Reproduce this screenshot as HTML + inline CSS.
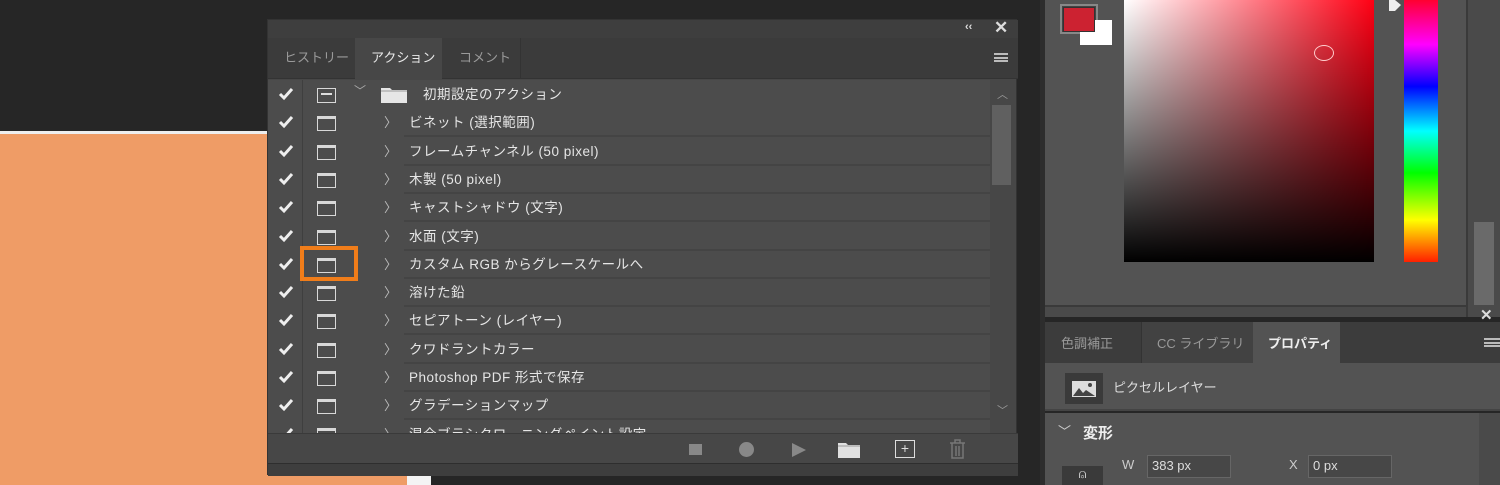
<!DOCTYPE html>
<html><head><meta charset="utf-8"><style>
*{margin:0;padding:0;box-sizing:border-box}
body{width:1500px;height:485px;background:#262626;position:relative;overflow:hidden;font-family:"Liberation Sans","Noto Sans CJK JP",sans-serif;color:#ddd;font-size:13px}
.a{position:absolute}
.row{position:absolute;left:0;width:722px;height:28px}
.row .ck{position:absolute;left:10px;top:6px}
.row .bx{position:absolute;left:49px;top:7px;width:19px;height:15px;border:1.5px solid #d8d8d8;border-top-width:3px}
.row .ar{position:absolute;left:116px;top:3px;color:#bbb;font-size:13px}
.row .tx{position:absolute;left:141px;top:2px;font-size:13.5px;color:#e6e6e6;letter-spacing:.5px}
.row .ln{position:absolute;left:136px;right:0;bottom:0;height:2px;background:#444}
</style></head><body>
<div class="a" style="left:0;top:131px;width:407px;height:3px;background:#eee"></div>
<div class="a" style="left:0;top:134px;width:407px;height:351px;background:#ef9c66"></div>
<div class="a" style="left:407px;top:470px;width:24px;height:15px;background:#f4f4f4"></div>

<div class="a" style="left:267px;top:19px;width:750px;height:456px;background:#474747;border:1px solid #333">
 <div class="a" style="left:0;top:0;width:750px;height:18px;background:#3e3e3e"></div>
 <div class="a" style="left:697px;top:1px;color:#ddd;font-size:11px;font-weight:bold">‹‹</div>
 <div class="a" style="left:726px;top:-2px;color:#ddd;font-size:17px;font-weight:bold">✕</div>
 <div class="a" style="left:0;top:18px;width:750px;height:41px;background:#3b3b3b;border-bottom:1px solid #333"></div>
 <div class="a" style="left:16px;top:27px;color:#9a9a9a;font-size:13px">ヒストリー</div>
 <div class="a" style="left:87px;top:18px;width:87px;height:42px;background:#474747"></div>
 <div class="a" style="left:103px;top:27px;color:#e8e8e8;font-size:13px">アクション</div>
 <div class="a" style="left:183px;top:18px;width:70px;height:41px;border-right:1px solid #333"></div>
 <div class="a" style="left:191px;top:27px;color:#9a9a9a;font-size:13px">コメント</div>
 <div class="a" style="left:726px;top:33px;width:14px;height:9px;border-top:2px solid #bbb;border-bottom:2px solid #bbb"><div style="margin-top:1.5px;height:2px;background:#bbb"></div></div>
 <div class="a" style="left:0;top:60px;width:722px;height:353px;background:#4c4c4c;overflow:hidden">
  <div class="a" style="left:34px;top:0;width:1px;height:353px;background:#3f3f3f"></div>
  <div id="rows"></div>
 </div>
 <div class="a" style="left:722px;top:60px;width:24px;height:353px;background:#474747"></div>
 <div class="a" style="left:729px;top:66px;color:#999;font-size:11px">︿</div>
 <div class="a" style="left:724px;top:85px;width:19px;height:80px;background:#606060"></div>
 <div class="a" style="left:729px;top:382px;color:#999;font-size:11px">﹀</div>
 <div class="a" style="left:0;top:413px;width:750px;height:30px;background:#474747;border-top:1px solid #3a3a3a"></div>
 <div class="a" style="left:421px;top:424px;width:13px;height:11px;background:#888"></div>
 <div class="a" style="left:471px;top:422px;width:15px;height:15px;border-radius:50%;background:#888"></div>
 <svg class="a" style="left:523px;top:422px" width="16" height="16"><path d="M1 1L15 8L1 15Z" fill="#888"/></svg>
 <svg class="a" style="left:570px;top:421px" width="22" height="17"><path d="M0 2h8l2 2h12v13H0Z" fill="#e0e0e0"/><path d="M0 5h22" stroke="#999"/></svg>
 <div class="a" style="left:627px;top:420px;width:20px;height:18px;border:1.5px solid #ddd;color:#ddd;font-size:14px;line-height:14px;text-align:center">+</div>
 <svg class="a" style="left:680px;top:419px" width="19" height="20"><path d="M2 4h15M7 4V1h5v3M4 4v15h11V4M8 7v10M11 7v10" stroke="#777" stroke-width="1.5" fill="none"/></svg>
 <div class="a" style="left:0;top:443px;width:750px;height:13px;background:#3e3e3e;border-top:1px solid #2e2e2e"></div>
</div>

<div class="a" style="left:1040px;top:0;width:5px;height:485px;background:#2d2d2d"></div>
<div class="a" style="left:1045px;top:0;width:421px;height:305px;background:#535353"></div>
<div class="a" style="left:1045px;top:305px;width:421px;height:12px;background:#4a4a4a;border-top:2px solid #3a3a3a"></div>
<div class="a" style="left:1466px;top:0;width:34px;height:317px;background:#4a4a4a;border-left:2px solid #3a3a3a"></div>
<div class="a" style="left:1474px;top:222px;width:20px;height:83px;background:#6a6a6a"></div>
<div class="a" style="left:1480px;top:306px;color:#ddd;font-size:15px;font-weight:bold">✕</div>
<div class="a" style="left:1060px;top:4px;width:38px;height:30px;border:2px solid #888;background:#444"></div>
<div class="a" style="left:1080px;top:20px;width:32px;height:25px;background:#fff"></div>
<div class="a" style="left:1063px;top:7px;width:32px;height:25px;background:#cc2231;border:1px solid #333"></div>
<div class="a" style="left:1124px;top:0;width:250px;height:262px;background:linear-gradient(to bottom,rgba(0,0,0,0),#000),linear-gradient(to right,#fff,#ff0014)"></div>
<div class="a" style="left:1314px;top:45px;width:20px;height:16px;border:1px solid #fcc;border-radius:50%"></div>
<div class="a" style="left:1404px;top:0;width:34px;height:262px;background:linear-gradient(to bottom,#ff0030 0%,#ff00ff 17%,#0000ff 33%,#00ffff 50%,#00ff00 66%,#ffff00 84%,#ff2000 100%)"></div>
<svg class="a" style="left:1388px;top:0" width="14" height="12"><path d="M1 0h6l6 5-6 6H1Z" fill="#eee"/></svg>

<div class="a" style="left:1045px;top:322px;width:455px;height:41px;background:#3c3c3c"></div>
<div class="a" style="left:1045px;top:322px;width:97px;height:41px;border-right:1px solid #333"></div>
<div class="a" style="left:1061px;top:333px;color:#999;font-size:13px">色調補正</div>
<div class="a" style="left:1142px;top:322px;width:111px;height:41px;background:#424242"></div>
<div class="a" style="left:1157px;top:333px;color:#999;font-size:13px">CC ライブラリ</div>
<div class="a" style="left:1253px;top:322px;width:87px;height:41px;background:#535353"></div>
<div class="a" style="left:1268px;top:333px;color:#eee;font-size:13px;font-weight:bold">プロパティ</div>
<div class="a" style="left:1484px;top:338px;width:16px;height:9px;border-top:2px solid #bbb;border-bottom:2px solid #bbb"><div style="margin-top:1.5px;height:2px;background:#bbb"></div></div>
<div class="a" style="left:1045px;top:363px;width:455px;height:48px;background:#535353;border-bottom:2px solid #444"></div>
<div class="a" style="left:1065px;top:373px;width:38px;height:31px;background:#3a3a3a"></div>
<svg class="a" style="left:1071px;top:380px" width="26" height="18"><rect x="1" y="1" width="24" height="16" fill="#ddd"/><path d="M2 16l6-8 4 5 3-3 9 6Z" fill="#444"/><circle cx="19" cy="5" r="2" fill="#444"/></svg>
<div class="a" style="left:1113px;top:377px;color:#ddd;font-size:13px">ピクセルレイヤー</div>
<div class="a" style="left:1045px;top:413px;width:455px;height:72px;background:#535353"></div>
<div class="a" style="left:1479px;top:413px;width:21px;height:72px;background:#4a4a4a"></div>
<div class="a" style="left:1058px;top:421px;color:#ccc;font-size:13px">﹀</div>
<div class="a" style="left:1083px;top:422px;color:#eee;font-size:15px;font-weight:bold">変形</div>
<div class="a" style="left:1122px;top:457px;color:#ccc;font-size:13px">W</div>
<div class="a" style="left:1147px;top:455px;width:84px;height:23px;background:#474747;border:1px solid #666;color:#ddd;font-size:13px;padding:2px 4px">383 px</div>
<div class="a" style="left:1289px;top:457px;color:#ccc;font-size:13px">X</div>
<div class="a" style="left:1308px;top:455px;width:84px;height:23px;background:#474747;border:1px solid #666;color:#ddd;font-size:13px;padding:2px 4px">0 px</div>
<div class="a" style="left:1062px;top:466px;width:41px;height:19px;background:#3a3a3a;color:#ddd;text-align:center;font-size:13px">⍝</div>

<div class="a" style="left:300px;top:246px;width:58px;height:35px;border:4px solid #f07d1a"></div>

<script>
var t=[["初期設定のアクション",1],["ビネット (選択範囲)"],["フレームチャンネル (50 pixel)"],["木製 (50 pixel)"],["キャストシャドウ (文字)"],["水面 (文字)"],["カスタム RGB からグレースケールへ"],["溶けた鉛"],["セピアトーン (レイヤー)"],["クワドラントカラー"],["Photoshop PDF 形式で保存"],["グラデーションマップ"],["混合ブラシクローニングペイント設定"]];
var h="";
t.forEach(function(r,i){
 var y=i*28.3+1;
 h+='<div class="row" style="top:'+y+'px">'+
 '<svg class="ck" width="16" height="14"><path d="M2 7l4 4 8-9" stroke="#eee" stroke-width="3" fill="none"/></svg>';
 if(r[1]){
  h+='<div class="bx" style="border-top-width:1.5px"><div style="margin:4px 3px 0;height:1.5px;background:#ddd"></div></div>'+
  '<div class="a" style="left:86px;top:1px;color:#aaa;font-size:12px">﹀</div>'+
  '<svg class="a" style="left:113px;top:6px" width="26" height="16"><path d="M0 1h9l2 2h15v13H0Z" fill="#e6e6e6"/><path d="M0 4h26" stroke="#999"/></svg>'+
  '<div class="tx" style="left:155px">'+r[0]+'</div>';
 } else {
  h+='<div class="bx"></div><div class="ar">〉</div><div class="tx">'+r[0]+'</div><div class="ln"></div>';
 }
 h+='</div>';
});
document.getElementById('rows').innerHTML=h;
</script>
</body></html>
